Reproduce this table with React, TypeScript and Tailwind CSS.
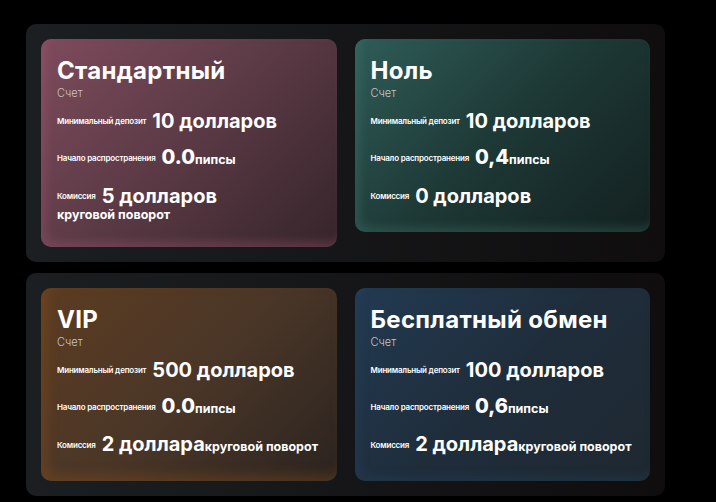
const font = { fontFamily: "Inter, 'Liberation Sans', sans-serif" };

type Plan = {
  title: string;
  deposit: string;
  spread: string;
  fee: string;
  feeNote?: string;
  wrapNote?: boolean;
  bg: string;
};

const rows: Plan[][] = [
  [
    {
      title: "Стандартный",
      deposit: "10 долларов",
      spread: "0.0",
      fee: "5 долларов",
      feeNote: "круговой поворот",
      wrapNote: true,
      bg: "bg-[linear-gradient(135deg,#7e4b5c_0%,#5d3b47_45%,#36252a_100%)] shadow-[inset_5px_-5px_10px_rgba(160,90,115,0.35)]",
    },
    {
      title: "Ноль",
      deposit: "10 долларов",
      spread: "0,4",
      fee: "0 долларов",
      bg: "bg-[linear-gradient(135deg,#2f5c57_0%,#1d3835_50%,#132120_100%)] shadow-[inset_5px_-5px_10px_rgba(70,130,120,0.3)]",
    },
  ],
  [
    {
      title: "VIP",
      deposit: "500 долларов",
      spread: "0.0",
      fee: "2 доллара",
      feeNote: "круговой поворот",
      bg: "bg-[linear-gradient(135deg,#5c3c21_0%,#4a3627_50%,#2b2420_100%)] shadow-[inset_6px_-6px_12px_rgba(140,80,30,0.35)]",
    },
    {
      title: "Бесплатный обмен",
      deposit: "100 долларов",
      spread: "0,6",
      fee: "2 доллара",
      feeNote: "круговой поворот",
      bg: "bg-[linear-gradient(135deg,#223a51_0%,#1f2d3b_50%,#1e2830_100%)] shadow-[inset_5px_-5px_10px_rgba(40,70,100,0.3)]",
    },
  ],
];

function Card({ p }: { p: Plan }) {
  return (
    <div className={`w-[296px] rounded-[10px] pl-[16px] pr-2 pt-[20px] pb-[25px] text-white ${p.bg}`}>
      <div className="text-[24px] font-bold leading-[24px] tracking-[0.3px]">{p.title}</div>
      <div className="mt-[4px] text-[11px] font-light leading-[13px] text-[#c9c4c6]">Счет</div>

      <div className="mt-[10px] flex h-[22px] items-center gap-[6px]">
        <span className="text-[8px] font-semibold leading-[10px] tracking-[-0.2px]">Минимальный депозит</span>
        <span className="text-[20px] font-bold leading-[22px]">{p.deposit}</span>
      </div>

      <div className="mt-[15px] flex h-[22px] items-center gap-[6px]">
        <span className="text-[8px] font-semibold leading-[10px] tracking-[-0.2px]">Начало распространения</span>
        <span className="flex items-baseline leading-[22px]">
          <span className="text-[20px] font-extrabold">{p.spread}</span>
          <span className="text-[12.5px] font-bold">пипсы</span>
        </span>
      </div>

      <div className="mt-[16px] flex h-[22px] items-center gap-[6px]">
        <span className="text-[8px] font-semibold leading-[10px] tracking-[-0.2px]">Комиссия</span>
        <span className="flex items-baseline whitespace-nowrap leading-[22px]">
          <span className="text-[20px] font-bold">{p.fee}</span>
          {p.feeNote && !p.wrapNote && <span className="text-[12.5px] font-bold">{p.feeNote}</span>}
        </span>
      </div>
      {p.feeNote && p.wrapNote && (
        <div className="mt-[1px] text-[12.5px] font-bold leading-[14px]">{p.feeNote}</div>
      )}
    </div>
  );
}

export default function App() {
  return (
    <div className="min-h-[502px] w-[716px] bg-black pl-[26px] pt-[24px]" style={font}>
      <div className="flex flex-col gap-[11px]">
        {rows.map((r, i) => (
          <div
            key={i}
            className="flex w-[639px] items-start gap-[18px] rounded-[10px] bg-gradient-to-r from-[#1b1f21] to-[#0f0d0e] p-[15px]"
          >
            {r.map((p) => (
              <Card key={p.title} p={p} />
            ))}
          </div>
        ))}
      </div>
    </div>
  );
}
